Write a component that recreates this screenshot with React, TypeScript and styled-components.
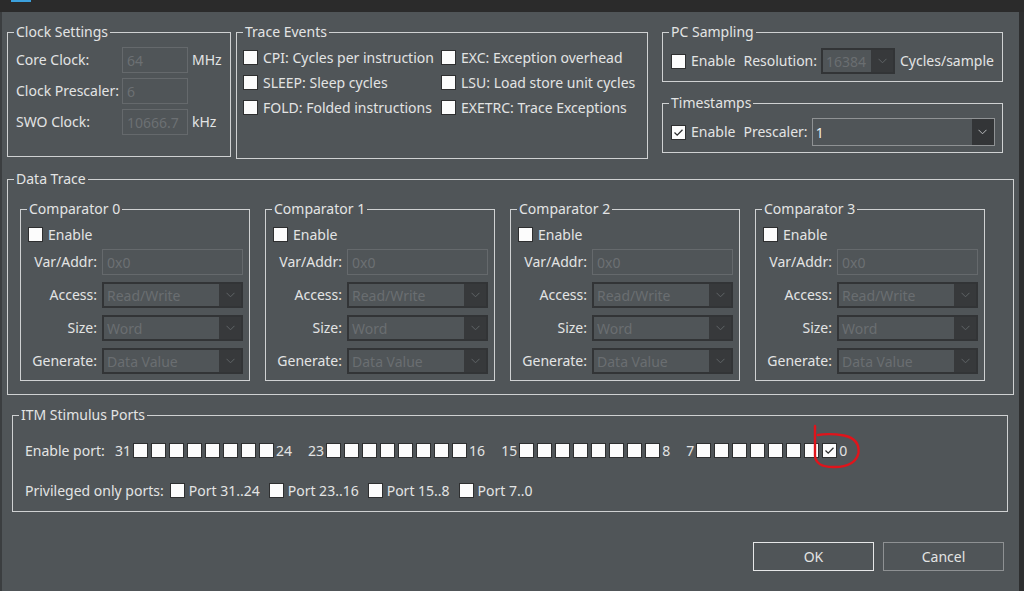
import React from 'react';
import styled, { createGlobalStyle } from 'styled-components';

const BG = '#505558';

const Global = createGlobalStyle`
  html, body { margin: 0; padding: 0; background: #2b2b2b; }
  body {
    font-family: "Noto Sans", "Open Sans", "DejaVu Sans", sans-serif;
    font-size: 14px;
    color: #e3e4e4;
  }
  #root { width: 1024px; height: 591px; overflow: hidden; }
  * { box-sizing: border-box; }
`;

const Screen = styled.div`
  width: 1024px;
  height: 591px;
  display: flex;
  flex-direction: column;
  background: #2b2b2b;
  overflow: hidden;
`;

const TitleBar = styled.div`
  height: 12px;
  flex: none;
  display: flex;
  padding-left: 11px;
  background: #2b2b2b;
`;

const AppIcon = styled.div`
  width: 20px;
  height: 2px;
  background: #3ca0dc;
`;

const WindowRow = styled.div`
  flex: 1;
  display: flex;
  min-height: 0;
`;

const SideEdge = styled.div<{ $w: number; $c: string }>`
  width: ${(p) => p.$w}px;
  flex: none;
  background: ${(p) => p.$c};
`;

const Dialog = styled.div`
  flex: 1;
  min-width: 0;
  background: ${BG};
  display: flex;
  flex-direction: column;
  padding: 20px 5px 0 5px;
`;

const Frame = styled.div<{ $w: number; $h: number }>`
  position: relative;
  flex: none;
  width: ${(p) => p.$w}px;
  height: ${(p) => p.$h}px;
  border: 1px solid #cfd1d2;
`;

const Legend = styled.span`
  position: absolute;
  top: -10px;
  left: 6px;
  padding: 0 2px;
  background: ${BG};
  line-height: 18px;
  white-space: nowrap;
`;

const TopRow = styled.div`
  display: flex;
  align-items: flex-start;
  height: 127px;
  flex: none;
`;

const RightColumn = styled.div`
  display: flex;
  flex-direction: column;
  gap: 21px;
  margin-left: 14px;
`;

/* ---------- clock settings ---------- */
const ClockGrid = styled.div`
  display: grid;
  grid-template-columns: 102px 66px auto;
  grid-auto-rows: 26px;
  column-gap: 4px;
  row-gap: 5px;
  align-items: center;
  padding: 14px 0 0 8px;
`;

const Text = styled.span`
  white-space: nowrap;
  line-height: 18px;
`;

const TextInput = styled.div<{ $w?: number }>`
  height: 26px;
  width: ${(p) => (p.$w ? `${p.$w}px` : '100%')};
  border: 1px solid #65696c;
  color: #6c7073;
  padding: 0 4px;
  display: flex;
  align-items: center;
  white-space: nowrap;
  overflow: hidden;
`;

/* ---------- checkbox ---------- */
const Box = styled.span`
  width: 15px;
  height: 15px;
  flex: none;
  background: #fcfcfc;
  border: 1px solid #2e2f30;
  display: inline-flex;
  align-items: center;
  justify-content: center;
`;

const CheckBox = ({ checked }: { checked?: boolean }) => (
  <Box>
    {checked && (
      <svg width="13" height="13" viewBox="0 0 13 13">
        <path d="M2.5 6.5 L5.2 9.2 L10.5 3.8" fill="none" stroke="#2e2f30" strokeWidth="1.3" />
      </svg>
    )}
  </Box>
);

const CheckItem = styled.label<{ $gap?: number }>`
  display: flex;
  align-items: center;
  gap: ${(p) => p.$gap ?? 5}px;
  height: 25px;
  white-space: nowrap;
  line-height: 18px;
`;

/* ---------- trace events ---------- */
const EventGrid = styled.div`
  display: grid;
  grid-template-columns: 198px auto;
  grid-auto-rows: 25px;
  padding: 12px 0 0 6px;
`;

/* ---------- combo ---------- */
const ComboBox = styled.div<{ $w: number; $enabled?: boolean }>`
  width: ${(p) => p.$w}px;
  height: ${(p) => (p.$enabled ? 28 : 26)}px;
  flex: none;
  display: flex;
  border: ${(p) => (p.$enabled ? '1px solid #8f9294' : '2px solid #323436')};
  color: ${(p) => (p.$enabled ? '#eeeeee' : '#6a6e71')};
`;

const ComboValue = styled.div`
  flex: 1;
  display: flex;
  align-items: center;
  padding-left: 3px;
  white-space: nowrap;
  overflow: hidden;
`;

const ComboArrow = styled.div<{ $enabled?: boolean }>`
  width: 22px;
  flex: none;
  display: flex;
  align-items: center;
  justify-content: center;
  background: ${(p) => (p.$enabled ? '#333537' : '#37393b')};
`;

const Combo = ({ value, w, enabled }: { value: string; w: number; enabled?: boolean }) => (
  <ComboBox $w={w} $enabled={enabled}>
    <ComboValue>{value}</ComboValue>
    <ComboArrow $enabled={enabled}>
      <svg width="9" height="6" viewBox="0 0 9 6">
        <path d="M0.5 0.8 L4.5 4.8 L8.5 0.8" fill="none" stroke={enabled ? '#b9bbbd' : '#606467'} strokeWidth="1" />
      </svg>
    </ComboArrow>
  </ComboBox>
);

/* ---------- PC sampling / timestamps ---------- */
const SettingRow = styled.div`
  display: flex;
  align-items: center;
  height: 28px;
  margin: 14px 0 0 8px;
`;

const Spaced = styled.span<{ $l?: number; $r?: number }>`
  white-space: nowrap;
  line-height: 18px;
  margin-left: ${(p) => p.$l ?? 0}px;
  margin-right: ${(p) => p.$r ?? 0}px;
`;

/* ---------- data trace ---------- */
const DataTraceFrame = styled(Frame)`
  margin-top: 20px;
`;

const ComparatorRow = styled.div`
  display: flex;
  gap: 15px;
  padding: 29px 0 0 12px;
`;

const ComparatorBody = styled.div`
  padding: 12px 6px 0 7px;
  display: flex;
  flex-direction: column;
`;

const FieldGrid = styled.div`
  display: grid;
  grid-template-columns: 69px 141px;
  grid-auto-rows: 26px;
  column-gap: 5px;
  row-gap: 7px;
  align-items: center;
  margin-top: 2px;
`;

const FieldLabel = styled.span`
  text-align: right;
  white-space: nowrap;
  line-height: 18px;
`;

/* ---------- ITM ---------- */
const ItmFrame = styled(Frame)`
  margin: 20px 0 0 5px;
`;

const ItmBody = styled.div`
  display: flex;
  flex-direction: column;
  gap: 15px;
  padding: 22px 0 0 12px;
`;

const PortRow = styled.div`
  display: flex;
  align-items: center;
  height: 25px;
`;

const PortLabel = styled.span`
  width: 90px;
  flex: none;
  white-space: nowrap;
  line-height: 18px;
`;

const PortGroup = styled.div`
  display: flex;
  align-items: center;
  gap: 2px;
  margin-right: 16px;
`;

const Boxes = styled.div`
  display: flex;
  gap: 3px;
`;

const Annotated = styled.span`
  position: relative;
  display: inline-flex;
`;

const RedMark = styled.svg`
  position: absolute;
  left: -11px;
  top: -20px;
  overflow: visible;
  pointer-events: none;
`;

const PrivRow = styled.div`
  display: flex;
  align-items: center;
  height: 25px;
  gap: 9px;
`;

const PrivLabel = styled.span`
  white-space: nowrap;
  line-height: 18px;
  margin-right: -3px;
`;

/* ---------- buttons ---------- */
const ButtonRow = styled.div`
  display: flex;
  justify-content: flex-end;
  gap: 9px;
  margin: 30px 10px 0 0;
`;

const Button = styled.button<{ $focused?: boolean }>`
  width: 121px;
  height: 29px;
  background: ${BG};
  border: 1px solid ${(p) => (p.$focused ? '#e6e7e8' : '#8e9193')};
  color: #e3e4e4;
  font-family: inherit;
  font-size: 14px;
  padding: 0;
`;

const Comparator = ({ n }: { n: number }) => (
  <Frame $w={230} $h={172}>
    <Legend>Comparator {n}</Legend>
    <ComparatorBody>
      <CheckItem>
        <CheckBox />
        Enable
      </CheckItem>
      <FieldGrid>
        <FieldLabel>Var/Addr:</FieldLabel>
        <TextInput>0x0</TextInput>
        <FieldLabel>Access:</FieldLabel>
        <Combo value="Read/Write" w={141} />
        <FieldLabel>Size:</FieldLabel>
        <Combo value="Word" w={141} />
        <FieldLabel>Generate:</FieldLabel>
        <Combo value="Data Value" w={141} />
      </FieldGrid>
    </ComparatorBody>
  </Frame>
);

const Port8 = ({ lastChecked }: { lastChecked?: boolean }) => (
  <Boxes>
    {Array.from({ length: 8 }).map((_, i) =>
      lastChecked && i === 7 ? (
        <Annotated key={i}>
          <CheckBox checked />
          <RedMark width="52" height="48" viewBox="0 0 52 48">
            <path
              d="M4 3 L4 33 Q5 44 22 44 Q44 44.5 47.5 30 Q49 16 33 12.5 Q18 10 7 12"
              fill="none"
              stroke="#e0141b"
              strokeWidth="2.4"
              strokeLinecap="round"
              strokeLinejoin="round"
            />
          </RedMark>
        </Annotated>
      ) : (
        <CheckBox key={i} />
      )
    )}
  </Boxes>
);

export default function App() {
  return (
    <Screen>
      <Global />
      <TitleBar>
        <AppIcon />
      </TitleBar>
      <WindowRow>
        <SideEdge $w={2} $c="#3b3e40" />
        <Dialog>
          <TopRow>
            <Frame $w={224} $h={125}>
              <Legend>Clock Settings</Legend>
              <ClockGrid>
                <Text>Core Clock:</Text>
                <TextInput>64</TextInput>
                <Text>MHz</Text>
                <Text>Clock Prescaler:</Text>
                <TextInput>6</TextInput>
                <span />
                <Text>SWO Clock:</Text>
                <TextInput>10666.7</TextInput>
                <Text>kHz</Text>
              </ClockGrid>
            </Frame>
            <Frame $w={412} $h={127} style={{ marginLeft: 5 }}>
              <Legend>Trace Events</Legend>
              <EventGrid>
                <CheckItem>
                  <CheckBox />
                  CPI: Cycles per instruction
                </CheckItem>
                <CheckItem>
                  <CheckBox />
                  EXC: Exception overhead
                </CheckItem>
                <CheckItem>
                  <CheckBox />
                  SLEEP: Sleep cycles
                </CheckItem>
                <CheckItem>
                  <CheckBox />
                  LSU: Load store unit cycles
                </CheckItem>
                <CheckItem>
                  <CheckBox />
                  FOLD: Folded instructions
                </CheckItem>
                <CheckItem>
                  <CheckBox />
                  EXETRC: Trace Exceptions
                </CheckItem>
              </EventGrid>
            </Frame>
            <RightColumn>
              <Frame $w={341} $h={50}>
                <Legend>PC Sampling</Legend>
                <SettingRow>
                  <CheckItem>
                    <CheckBox />
                    Enable
                  </CheckItem>
                  <Spaced $l={8} $r={4}>Resolution:</Spaced>
                  <Combo value="16384" w={74} />
                  <Spaced $l={5}>Cycles/sample</Spaced>
                </SettingRow>
              </Frame>
              <Frame $w={341} $h={50}>
                <Legend>Timestamps</Legend>
                <SettingRow>
                  <CheckItem>
                    <CheckBox checked />
                    Enable
                  </CheckItem>
                  <Spaced $l={8} $r={4}>Prescaler:</Spaced>
                  <Combo value="1" w={183} enabled />
                </SettingRow>
              </Frame>
            </RightColumn>
          </TopRow>

          <DataTraceFrame $w={1007} $h={216}>
            <Legend>Data Trace</Legend>
            <ComparatorRow>
              {[0, 1, 2, 3].map((n) => (
                <Comparator key={n} n={n} />
              ))}
            </ComparatorRow>
          </DataTraceFrame>

          <ItmFrame $w={996} $h={97}>
            <Legend>ITM Stimulus Ports</Legend>
            <ItmBody>
              <PortRow>
                <PortLabel>Enable port:</PortLabel>
                <PortGroup>
                  <Text>31</Text>
                  <Port8 />
                  <Text>24</Text>
                </PortGroup>
                <PortGroup>
                  <Text>23</Text>
                  <Port8 />
                  <Text>16</Text>
                </PortGroup>
                <PortGroup>
                  <Text>15</Text>
                  <Port8 />
                  <Text>8</Text>
                </PortGroup>
                <PortGroup>
                  <Text>7</Text>
                  <Port8 lastChecked />
                  <Text>0</Text>
                </PortGroup>
              </PortRow>
              <PrivRow>
                <PrivLabel>Privileged only ports:</PrivLabel>
                <CheckItem $gap={4}>
                  <CheckBox />
                  Port 31..24
                </CheckItem>
                <CheckItem $gap={4}>
                  <CheckBox />
                  Port 23..16
                </CheckItem>
                <CheckItem $gap={4}>
                  <CheckBox />
                  Port 15..8
                </CheckItem>
                <CheckItem $gap={4}>
                  <CheckBox />
                  Port 7..0
                </CheckItem>
              </PrivRow>
            </ItmBody>
          </ItmFrame>

          <ButtonRow>
            <Button $focused>OK</Button>
            <Button>Cancel</Button>
          </ButtonRow>
        </Dialog>
        <SideEdge $w={5} $c="#2d2e2f" />
      </WindowRow>
    </Screen>
  );
}
